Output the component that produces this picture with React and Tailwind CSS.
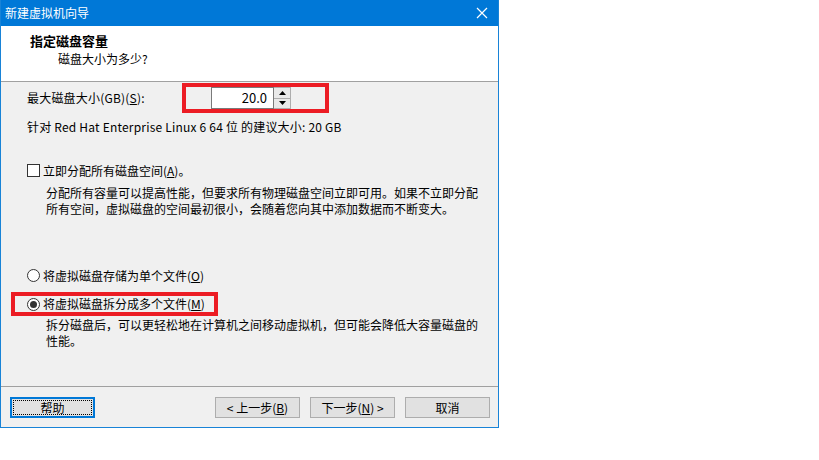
import { useState } from "react";

const FONT = { fontFamily: '"Noto Sans CJK SC", "Noto Sans", sans-serif' };

const Btn = ({ children, focused }) => (
  <button
    className={`h-[21px] w-[85px] bg-[#e1e1e1] text-[12px] leading-none text-black flex items-center justify-center ${
      focused ? "border-2 border-[#0078d7] outline outline-1 outline-dotted outline-black -outline-offset-4" : "border border-[#adadad]"
    }`}
  >
    {children}
  </button>
);

const App = () => {
  const [split, setSplit] = useState(true);
  const [alloc, setAlloc] = useState(false);

  return (
    <div className="w-[819px] h-[460px] bg-white text-[12px] text-black" style={FONT}>
      <div className="w-[499px] h-[428px] border border-[#1883d7] border-t-0 flex flex-col bg-[#f0f0f0]">
        {/* Title bar */}
        <div className="h-[26px] bg-[#0078d7] flex items-center justify-between pl-[4px] pr-[10px] text-white">
          <span className="text-[12px]">新建虚拟机向导</span>
          <svg width="12" height="12" viewBox="0 0 12 12">
            <path d="M1 1 L11 11 M11 1 L1 11" stroke="white" strokeWidth="1.2" />
          </svg>
        </div>

        {/* Header */}
        <div className="h-[56px] bg-white border-b border-[#a0a0a0] pl-[29px] pt-[6px]">
          <div className="font-bold text-[13px] leading-[18px]">指定磁盘容量</div>
          <div className="pl-[28px] leading-[18px]">磁盘大小为多少?</div>
        </div>

        {/* Content */}
        <div className="flex-1 flex flex-col pl-[26px] pr-[10px]">
          <div className="flex items-center h-[30px] mt-[1px]">
            <span className="w-[155px] shrink-0 tracking-[0.2px]">
              最大磁盘大小(GB)(<u>S</u>):
            </span>
            <div className="border-4 border-[#ec1c24] h-[30px] w-[147px] flex items-center pl-[25px]">
              <div className="w-[63px] h-[22px] bg-white border border-[#7a7a7a] flex items-center justify-end pr-[6px] text-[13px]">
                20.0
              </div>
              <div className="flex flex-col w-[17px] h-[22px] border border-[#adadad] border-l-0">
                <div className="flex-1 flex items-center justify-center bg-[#e9e9e9] border-b border-[#adadad]">
                  <svg width="7" height="4" viewBox="0 0 7 4"><path d="M3.5 0 L7 4 L0 4 Z" fill="black" /></svg>
                </div>
                <div className="flex-1 flex items-center justify-center bg-[#e9e9e9]">
                  <svg width="7" height="4" viewBox="0 0 7 4"><path d="M0 0 L7 0 L3.5 4 Z" fill="black" /></svg>
                </div>
              </div>
            </div>
          </div>
          <div className="mt-[5px] leading-[17px] tracking-[0.2px]">针对 Red Hat Enterprise Linux 6 64 位 的建议大小: 20 GB</div>

          <label className="flex items-center mt-[27px] h-[17px]" onClick={() => setAlloc(!alloc)}>
            <span className="w-[13px] h-[13px] border border-[#333] bg-white mr-[3px] shrink-0" />
            <span>立即分配所有磁盘空间(<u>A</u>)。</span>
          </label>
          <div className="pl-[19px] mt-[6px] leading-[16px]">
            分配所有容量可以提高性能，但要求所有物理磁盘空间立即可用。如果不立即分配
            <br />
            所有空间，虚拟磁盘的空间最初很小，会随着您向其中添加数据而不断变大。
          </div>

          <label className="flex items-center mt-[50px] h-[17px]" onClick={() => setSplit(false)}>
            <span className="w-[13px] h-[13px] rounded-full border border-[#333] bg-white mr-[3px] shrink-0 flex items-center justify-center">
              {!split && <span className="w-[7px] h-[7px] rounded-full bg-[#333]" />}
            </span>
            <span>将虚拟磁盘存储为单个文件(<u>O</u>)</span>
          </label>
          <div className="-ml-[16px] mt-[8px] w-[207px] h-[24px] border-4 border-[#ec1c24] flex items-center pl-[12px]">
            <label className="flex items-center" onClick={() => setSplit(true)}>
              <span className="w-[13px] h-[13px] rounded-full border border-[#333] bg-white mr-[3px] shrink-0 flex items-center justify-center">
                {split && <span className="w-[7px] h-[7px] rounded-full bg-[#333]" />}
              </span>
              <span>将虚拟磁盘拆分成多个文件(<u>M</u>)</span>
            </label>
          </div>
          <div className="pl-[19px] mt-[1px] leading-[16px]">
            拆分磁盘后，可以更轻松地在计算机之间移动虚拟机，但可能会降低大容量磁盘的
            <br />
            性能。
          </div>
        </div>

        {/* Footer */}
        <div className="h-[41px] border-t border-[#a0a0a0] flex items-start pt-[10px] pl-[9px] pr-[8px]">
          <Btn focused>帮助</Btn>
          <div className="flex-1" />
          <div className="flex gap-[10px]">
            <Btn>&lt; 上一步(<u>B</u>)</Btn>
            <Btn>下一步(<u>N</u>) &gt;</Btn>
            <Btn>取消</Btn>
          </div>
        </div>
      </div>
    </div>
  );
};

export default App;
